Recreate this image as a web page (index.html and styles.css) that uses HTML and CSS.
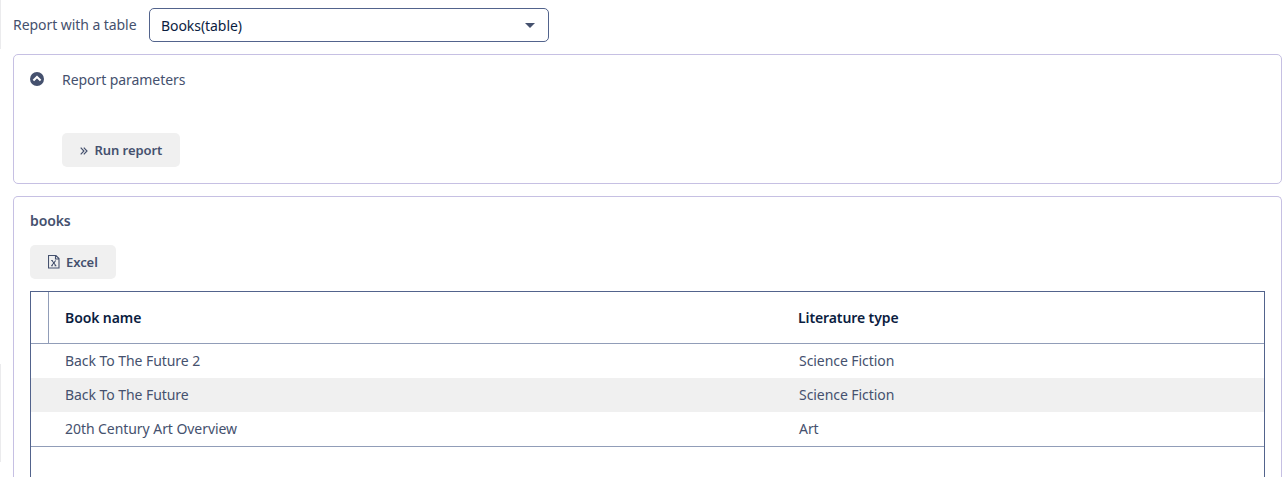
FILE: index.html
```html
<!DOCTYPE html>
<html lang="en">
<head>
<meta charset="utf-8">
<title>Report with a table</title>
<link rel="stylesheet" href="styles.css">
</head>
<body>
<div class="edge edge-top"></div>
<div class="edge edge-bottom"></div>
<main class="page">
  <div class="chooser">
    <span class="label">Report with a table</span>
    <div class="select"><span>Books(table)</span><span class="caret"></span></div>
  </div>
  <section class="panel params">
    <div class="summary">
      <svg class="toggle" viewBox="0 0 14 14"><circle cx="7" cy="7" r="7"/><path d="M3.4 8.5 7 5l3.6 3.5" fill="none" stroke="#fff" stroke-width="2"/></svg>
      <span>Report parameters</span>
    </div>
    <button class="button run"><svg viewBox="0 0 8 8"><path d="M.7.6 3.9 4 .7 7.4M3.8.6 7 4 3.8 7.4"/></svg>Run report</button>
  </section>
  <section class="panel result">
    <h2 class="title">books</h2>
    <button class="button excel"><svg viewBox="0 0 12 14"><path d="M.5.5h7.4l3.1 3.1v9.4H.5zM7.5.5v3.5h3.5"/><path d="M4 5.5l3.7 5M7.7 5.5 3.8 10.5M3.1 10.8h1.7M6.6 10.8h1.8M3.2 5.5h1.6"/></svg>Excel</button>
    <div class="grid">
      <div class="row head"><span class="marker"></span><span class="cell">Book name</span><span class="cell">Literature type</span></div>
      <div class="row"><span></span><span class="cell">Back To The Future 2</span><span class="cell kind">Science Fiction</span></div>
      <div class="row alt"><span></span><span class="cell">Back To The Future</span><span class="cell kind">Science Fiction</span></div>
      <div class="row last"><span></span><span class="cell">20th Century Art Overview</span><span class="cell kind">Art</span></div>
    </div>
  </section>
</main>
</body>
</html>
```

FILE: styles.css
```css
* { box-sizing: border-box; }
html { overflow: hidden; }
body { margin: 0; height: 477px; overflow: hidden; background: #fff; color: #45516e; font: 14px/20px "Noto Sans", sans-serif; letter-spacing: -0.06px; }
.page { height: 477px; padding: 8px 6px 0 13px; display: flex; flex-direction: column; }
/* Shadow slivers of the side drawer */
.edge { position: absolute; left: 0; width: 1px; background: #ebebed; }
.edge-top { top: 0; height: 49px; }
.edge-bottom { top: 364px; height: 98px; }
.chooser { display: flex; align-items: center; height: 34px; margin-bottom: 12px; }
.label { width: 136px; white-space: nowrap; }
.select { width: 400px; height: 34px; border: 1px solid #52638c; border-radius: 5px; padding: 1px 13px 0 11px; display: flex; align-items: center; justify-content: space-between; color: #0b1d3f; }
.caret { border: 5px solid transparent; border-top-color: #45516e; border-bottom: 0; margin-bottom: 1px; }
.panel { border: 1px solid #c6c0e3; border-radius: 5px; }
.params { height: 130px; padding: 15px 16px; margin-bottom: 12px; }
.summary { display: flex; align-items: center; gap: 18px; height: 20px; margin-bottom: 43px; }
.toggle { width: 14px; height: 14px; margin-bottom: 2px; fill: #45516e; }
.button { display: flex; align-items: center; height: 34px; border: 0; border-radius: 5px; background: #f0f0f0; color: #45516e; font: 600 13px/20px "Noto Sans", sans-serif; letter-spacing: -0.06px; }
.button svg { fill: none; stroke: currentColor; stroke-width: 1; }
.run { width: 118px; margin-left: 32px; padding: 0 0 0 17.5px; gap: 7px; }
.run svg { width: 8px; height: 8px; margin-top: 1px; stroke-width: 1.2; }
.excel { width: 86px; padding: 0 0 0 18px; gap: 6px; margin-bottom: 12px; }
.excel svg { width: 12px; height: 14px; stroke-width: 1.1; }
.result { flex: 1; min-height: 0; border-bottom: 0; border-bottom-left-radius: 0; border-bottom-right-radius: 0; padding: 14px 16px 0; display: flex; flex-direction: column; }
.title { margin: 0 0 14px; font: 600 14px/20px "Noto Sans", sans-serif; letter-spacing: -0.1px; }
.excel, .title { flex: none; }
.grid { flex: 1; border: 1px solid #52638c; border-bottom: 0; }
.row { display: grid; grid-template-columns: 18px 733px 1fr; height: 34px; align-items: center; }
.cell { padding-left: 16px; }
.kind { padding-left: 17px; }
.head { height: 52px; border-bottom: 1px solid #919db8; color: #0b1d3f; font-weight: 600; letter-spacing: -0.1px; }
.marker { height: 100%; border-right: 1px solid #919db8; }
.alt { background: #f0f0f0; }
.last { height: 35px; border-bottom: 1px solid #919db8; }
```
